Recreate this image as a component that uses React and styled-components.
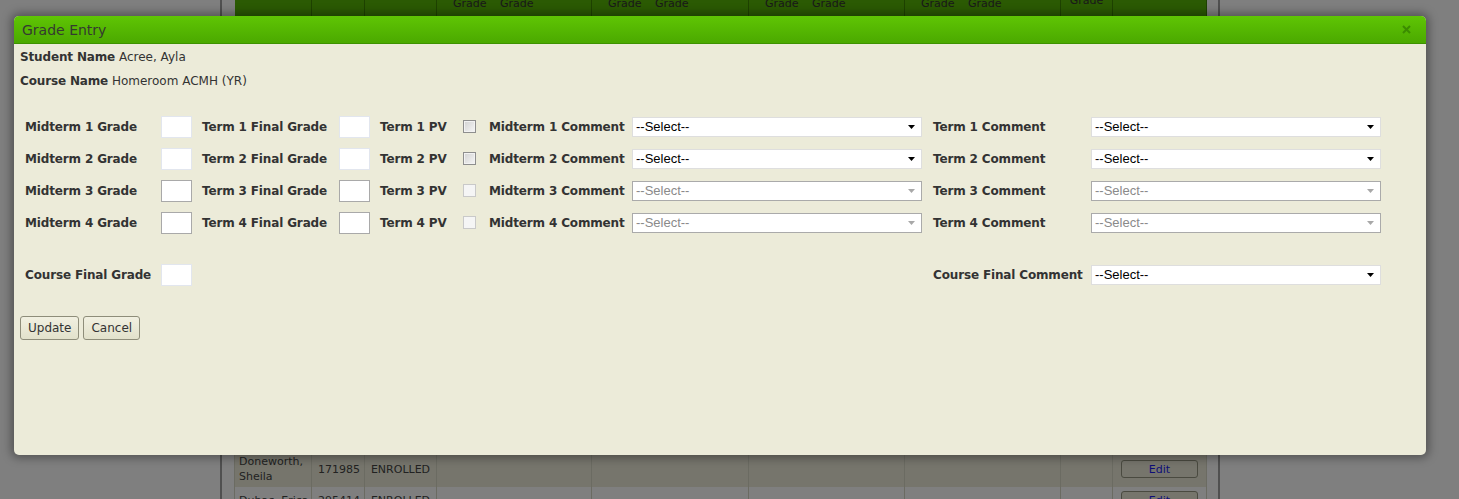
import React from "react";
import styled, { createGlobalStyle } from "styled-components";

const students = [
  ["Abbott,", "Marcus", "183302"],
  ["Acree,", "Ayla", "201145"],
  ["Baines,", "Jordan", "176520"],
  ["Barrow,", "Chloe", "190873"],
  ["Castillo,", "Mateo", "204418"],
  ["Chen,", "Lily", "188261"],
  ["Coleman,", "Devon", "172390"],
  ["Cordova,", "Isabel", "199057"],
  ["Dalton,", "Reese", "203376"],
  ["Dawson,", "Tyler", "185634"],
  ["Delgado,", "Sofia", "197712"],
  ["Dillard,", "Grant", "181049"],
  ["Doneworth,", "Sheila", "171985"],
  ["Dubac, Erica", "", "295414"],
];

const terms = [1, 2, 3, 4];
const columnWidths = [77, 53, 72, 155, 157, 156, 156, 52, 94];

const GradeEntry = () => {
  return (
    <Screen>
      <GlobalStyle />
      <PageShell>
        <RosterTable>
          <colgroup>
            {columnWidths.map((w, i) => (
              <col key={i} style={{ width: w }} />
            ))}
          </colgroup>
          <thead>
            <tr>
              <HeadCell $middle>Student</HeadCell>
              <HeadCell $middle>ID</HeadCell>
              <HeadCell $middle>Status</HeadCell>
              {terms.map((t) => (
                <HeadCell key={t}>
                  <HeadPair>
                    <span>
                      Midterm
                      <br />
                      Grade
                    </span>
                    <span>
                      Final
                      <br />
                      Grade
                    </span>
                  </HeadPair>
                </HeadCell>
              ))}
              <HeadCell $raised>
                Course
                <br />
                Final
                <br />
                Grade
              </HeadCell>
              <HeadCell $middle />
            </tr>
          </thead>
          <tbody>
            {students.map(([last, first, id], i) => (
              <RosterRow key={id} $alt={i % 2 === 0} $short={!first}>
                <DataCell $first>
                  {last}
                  {first && <br />}
                  {first}
                </DataCell>
                <DataCell $align="right">{id}</DataCell>
                <DataCell $align="center">ENROLLED</DataCell>
                <DataCell />
                <DataCell />
                <DataCell />
                <DataCell />
                <DataCell />
                <DataCell>
                  <EditButton>Edit</EditButton>
                </DataCell>
              </RosterRow>
            ))}
          </tbody>
        </RosterTable>
      </PageShell>

      <Backdrop />

      <Dialog>
        <TitleBar>
          <Title>Grade Entry</Title>
          <CloseButton aria-label="close">
            <svg width="9" height="9" viewBox="0 0 9 9">
              <path d="M1 1 L8 8 M8 1 L1 8" stroke="#3b8c00" strokeWidth="2" />
            </svg>
          </CloseButton>
        </TitleBar>
        <Body>
          <InfoLine>
            <b>Student Name</b> Acree, Ayla
          </InfoLine>
          <InfoLine>
            <b>Course Name</b> Homeroom ACMH (YR)
          </InfoLine>

          <GradeGrid>
            {terms.map((t) => {
              const open = t <= 2;
              return (
                <React.Fragment key={t}>
                  <Label>Midterm {t} Grade</Label>
                  <Cell>
                    <GradeInput $outlined={!open} />
                  </Cell>
                  <Label>Term {t} Final Grade</Label>
                  <Cell>
                    <GradeInput $outlined={!open} />
                  </Cell>
                  <Label>Term {t} PV</Label>
                  <Cell>
                    <Check type="checkbox" disabled={!open} />
                  </Cell>
                  <Label>Midterm {t} Comment</Label>
                  <Cell>
                    <CommentSelect disabled={!open} />
                  </Cell>
                  <Label>Term {t} Comment</Label>
                  <Cell>
                    <CommentSelect disabled={!open} />
                  </Cell>
                </React.Fragment>
              );
            })}
            <Spacer />
            <Label>Course Final Grade</Label>
            <Cell>
              <GradeInput />
            </Cell>
            <Label $col={9}>Course Final Comment</Label>
            <Cell>
              <CommentSelect />
            </Cell>
          </GradeGrid>

          <Actions>
            <Button>Update</Button>
            <Button>Cancel</Button>
          </Actions>
        </Body>
      </Dialog>
    </Screen>
  );
};

const CommentSelect = ({ disabled }) => (
  <SelectWrap>
    <Select disabled={disabled} defaultValue="">
      <option value="">--Select--</option>
    </Select>
    <Arrow width="7" height="4" viewBox="0 0 7 4">
      <path d="M0 0 H7 L3.5 4 Z" fill={disabled ? "#a8a8a8" : "#000"} />
    </Arrow>
  </SelectWrap>
);

const GlobalStyle = createGlobalStyle`
  html, body {
    margin: 0;
    padding: 0;
  }
  body {
    background: #fff;
    font-family: "DejaVu Sans", Verdana, sans-serif;
    overflow: hidden;
  }
`;

const Screen = styled.div`
  position: relative;
  width: 1459px;
  height: 499px;
  overflow: hidden;
  background: #fff;
`;

/* page behind the modal */
const PageShell = styled.div`
  margin-left: 220px;
  width: 972px;
  padding: 0 12px;
  border-left: 2px solid #a0a0a0;
  border-right: 2px solid #a0a0a0;
  min-height: 560px;
`;

const RosterTable = styled.table`
  margin-top: -37px;
  width: 972px;
  table-layout: fixed;
  border-collapse: collapse;
  font-size: 11px;
  color: #444;
`;

const HeadCell = styled.th`
  height: 56px;
  padding: 0 4px ${(p) => (p.$raised ? "11px" : "8px")};
  box-sizing: border-box;
  background: #56b406;
  border-right: 1px solid #3c8400;
  color: #333;
  font-weight: normal;
  font-size: 11px;
  line-height: 14px;
  text-align: center;
  vertical-align: ${(p) => (p.$middle ? "middle" : "bottom")};
`;

const HeadPair = styled.div`
  display: flex;
  padding-left: 12px;
  text-align: left;

  span {
    width: 47px;
  }
`;

const RosterRow = styled.tr`
  background: ${(p) => (p.$alt ? "#ecebd8" : "#fff")};

  td {
    height: ${(p) => (p.$short ? "26px" : "36px")};
  }
`;

const DataCell = styled.td`
  padding: 0 4px;
  border-right: 1px solid #d6d6c4;
  border-left: ${(p) => (p.$first ? "1px solid #d6d6c4" : "none")};
  text-align: ${(p) => p.$align || "left"};
  line-height: 15px;
  white-space: nowrap;
`;

const EditButton = styled.button`
  width: 77px;
  height: 18px;
  margin-left: 4px;
  padding: 0;
  border: 1px solid #949480;
  border-radius: 3px;
  background: #ecebd8;
  color: #1c1cf0;
  font-family: "DejaVu Sans", Verdana, sans-serif;
  font-size: 11px;
`;

const Backdrop = styled.div`
  position: absolute;
  inset: 0;
  background: rgba(0, 0, 0, 0.5);
`;

/* modal */
const Dialog = styled.div`
  position: absolute;
  left: 14px;
  top: 16px;
  width: 1412px;
  height: 439px;
  display: flex;
  flex-direction: column;
  background: #ecebd9;
  border-radius: 5px;
  box-shadow: 0 0 10px 3px rgba(0, 0, 0, 0.35);
  overflow: hidden;
`;

const TitleBar = styled.div`
  height: 27px;
  flex: none;
  display: flex;
  align-items: center;
  justify-content: space-between;
  padding: 0 15px 0 8px;
  background: linear-gradient(#5fc504, #4ba900);
  border-bottom: 1px solid #3d9200;
`;

const Title = styled.span`
  font-size: 14px;
  color: #343a30;
`;

const CloseButton = styled.span`
  display: flex;
  align-items: center;
`;

const Body = styled.div`
  padding: 5px 6px 0;
  color: #333;
  font-size: 12px;
`;

const InfoLine = styled.div`
  line-height: 16px;
  margin-bottom: 8px;

  b {
    font-weight: bold;
    letter-spacing: -0.15px;
  }
`;

const GradeGrid = styled.div`
  display: grid;
  grid-template-columns: 136px 41px 137px 41px 83px 26px 143px 301px 158px 301px;
  grid-template-rows: repeat(4, 32px) 20px 32px;
  align-items: center;
  margin-top: 22px;
`;

const Label = styled.div`
  padding: 0 5px;
  font-weight: bold;
  letter-spacing: -0.15px;
  white-space: nowrap;
  grid-column: ${(p) => p.$col || "auto"};
`;

const Cell = styled.div`
  display: flex;
  align-items: center;
  padding: 0 5px;
`;

const Spacer = styled.div`
  grid-column: 1 / -1;
`;

const GradeInput = styled.input`
  width: 31px;
  height: 22px;
  box-sizing: border-box;
  margin: 0;
  background: #fff;
  border: 1px solid ${(p) => (p.$outlined ? "#a9a9a9" : "#e2e6ee")};
  border-radius: 0;
  outline: none;
`;

const Check = styled.input`
  appearance: none;
  width: 13px;
  height: 13px;
  margin: -2px 0 0;
  border: 1px solid #8e8e8e;
  background: linear-gradient(135deg, #d2d2d2, #f6f6f6);
  box-shadow: inset 0 0 0 1px #f2f2f2;

  &:disabled {
    border-color: #c9c9c9;
    background: #f5f5f5;
    box-shadow: none;
  }
`;

const SelectWrap = styled.div`
  position: relative;
  width: 290px;
  height: 20px;
  margin-top: -1px;
`;

const Select = styled.select`
  appearance: none;
  width: 100%;
  height: 100%;
  box-sizing: border-box;
  margin: 0;
  padding: 0 0 0 3px;
  border: 1px solid #dedede;
  border-radius: 0;
  background: #fff;
  color: #000;
  font-family: "Liberation Sans", Arial, sans-serif;
  font-size: 13px;
  outline: none;

  &:disabled {
    border-color: #aaa;
    color: #8a8a8a;
    background: #fff;
    opacity: 1;
  }
`;

const Arrow = styled.svg`
  position: absolute;
  right: 7px;
  top: 8px;
  pointer-events: none;
`;

const Actions = styled.div`
  display: flex;
  gap: 4px;
  margin-top: 25px;
`;

const Button = styled.button`
  height: 24px;
  padding: 0 7px;
  border: 1px solid #8e8d7a;
  border-radius: 3px;
  background: linear-gradient(#f1f0e1, #e2e1cb);
  color: #333;
  font-family: "DejaVu Sans", Verdana, sans-serif;
  font-size: 12px;
`;

export default GradeEntry;
